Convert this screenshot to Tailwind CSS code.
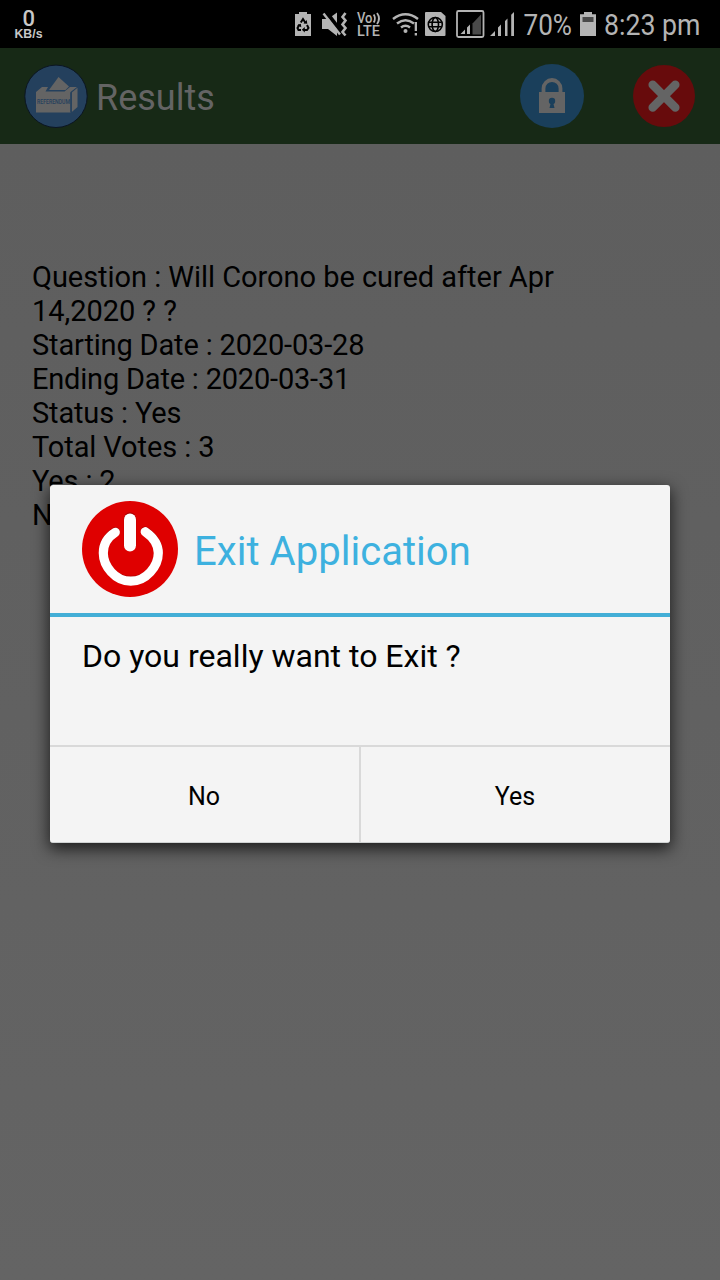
<!DOCTYPE html>
<html lang="en">
<head>
    <meta charset="UTF-8">
    <meta name="viewport" content="width=device-width, initial-scale=1.0">
    <title>Results</title>
    <script src="https://cdn.jsdelivr.net/npm/@tailwindcss/browser@4"></script>
    <style>
        body {
            font-family: Roboto, sans-serif;
        }
    </style>
</head>
<body class="w-[720px] h-[1280px] overflow-hidden relative flex flex-col bg-black text-black">
    <!-- Status bar -->
    <header class="h-12 shrink-0 flex items-center bg-black">
        <svg class="w-14 h-12" viewBox="0 0 56 48" fill="#c8c8c8" font-weight="700">
            <text x="22.500" y="26" font-size="22" font-weight="500" textLength="12.500" lengthAdjust="spacingAndGlyphs" font-family="Roboto">0</text>
            <text x="14.500" y="37.500" font-size="12" textLength="28" lengthAdjust="spacingAndGlyphs" font-family="Liberation Sans">KB/s</text>
        </svg>
        <div class="flex ml-auto">
            <!-- Battery saver -->
            <svg class="w-[26px] h-12" viewBox="290 0 26 48">
                <path d="M299 12h8v2h4v22h-16V14h4z" fill="#b4b4b4"/>
                <path d="M300.800 22.500L303 19l2.400 3.700M307 25l1.500 3-1.500 2h-3.500M301 30h-2.500l-1-2 2-3.500" fill="none" stroke="#000" stroke-width="2"/>
                <path d="M303.500 23.500l3.800.2-.6-3.800zM304.800 27v5.500l-3-2.700zM297 25.200l3.800-1.500.5 3.600z" fill="#000"/>
            </svg>
            <!-- Muted / vibrate -->
            <svg class="w-9 h-12" viewBox="316 0 36 48">
                <path d="M322 19h6l9-6.500v23.500l-9-7h-6z" fill="#b4b4b4"/>
                <path d="M325 10.500l16 21" stroke="#000" stroke-width="4"/>
                <path d="M323.500 13.500l16.500 21" stroke="#b4b4b4" stroke-width="2.400"/>
                <path d="M345.500 13l-3 4 3 3.500-3 4 3 3.500-3 4 3 3.500" fill="none" stroke="#b4b4b4" stroke-width="2.600"/>
            </svg>
            <!-- VoLTE -->
            <svg class="w-9 h-12" viewBox="352 0 36 48" fill="#b4b4b4" font-family="Roboto" font-weight="500">
                <text x="357" y="22.700" font-size="14" textLength="15.500" lengthAdjust="spacingAndGlyphs">Vo</text>
                <text x="357" y="36" font-size="14.500" textLength="23" lengthAdjust="spacingAndGlyphs">LTE</text>
                <path d="M373.700 14.500q2.500 4 0 8M377 13q4 5.500 0 11" fill="none" stroke="#b4b4b4" stroke-width="1.800"/>
            </svg>
            <!-- Wifi -->
            <svg class="w-9 h-12" viewBox="388 0 36 48">
                <g fill="none" stroke="#b4b4b4" stroke-width="2.500">
                    <path d="M393 19q12.500-9.500 25 0"/>
                    <path d="M397 23.500q8.500-6.500 17 0"/>
                    <path d="M401 27.500q4.500-3.500 9 0"/>
                </g>
                <circle cx="405.500" cy="31" r="2" fill="#b4b4b4"/>
                <path d="M414.700 22h2.300v9h-2.300zM414.700 33h2.300v2.500h-2.300z" fill="#b4b4b4"/>
            </svg>
            <!-- Sim with globe -->
            <svg class="w-7 h-12" viewBox="424 0 28 48">
                <path d="M426 12h15l4.500 4v19q0 1-1 1H426q-1 0-1-1V13q0-1 1-1z" fill="#b4b4b4"/>
                <g fill="none" stroke="#000" stroke-width="1.600">
                    <circle cx="435.300" cy="24.500" r="7"/>
                    <ellipse cx="435.300" cy="24.500" rx="3.200" ry="7"/>
                    <path d="M429 22.200h12.600M429 26.800h12.600"/>
                </g>
            </svg>
            <!-- Signals -->
            <svg class="w-[68px] h-12" viewBox="452 0 68 48">
                <rect x="457" y="11" width="26.500" height="26" rx="1.500" fill="none" stroke="#b4b4b4" stroke-width="1.800"/>
                <path d="M472.500 23.500l8.500-9v20h-8.500z" fill="#4a4a4a"/>
                <path d="M460.500 34l4.500-4.500V34zM467 27.500l3-3V34h-3z" fill="#b4b4b4"/>
                <path d="M490 36l5-5v5zM498 27.500l3-3V36h-3zM505 21l2.500-2.500V36H505zM511.200 14.700l2.800-2.700v24h-2.800z" fill="#b4b4b4"/>
            </svg>
            <svg class="w-[55px] h-12" viewBox="520 0 55 48" fill="#b4b4b4">
                <text x="523.500" y="35" font-size="30" textLength="48.500" lengthAdjust="spacingAndGlyphs" font-family="Roboto">70%</text>
            </svg>
            <!-- Battery -->
            <svg class="w-[25px] h-12" viewBox="575 0 25 48">
                <path d="M584 12h8v2.300h4V36h-16V14.300h4z" fill="#b4b4b4"/>
                <path d="M582.500 17h11v5h-11z" fill="#4a4a4a"/>
            </svg>
            <svg class="w-[120px] h-12" viewBox="600 0 120 48" fill="#b4b4b4">
                <text x="604" y="35" font-size="30" textLength="96.500" lengthAdjust="spacingAndGlyphs" font-family="Roboto">8:23 pm</text>
            </svg>
        </div>
    </header>

    <!-- App bar -->
    <nav class="h-24 shrink-0 flex items-center bg-[#172916] pl-6 pr-6">
        <svg class="w-16 h-16" viewBox="24 64 64 64">
            <circle cx="56" cy="96.300" r="31.200" fill="#24405d" stroke="#0b1522" stroke-width="1"/>
            <path d="M36 92l6-5h6l-2.500 4.500h19L70 87h7l-6.500 5v20.500H36z" fill="#646464"/>
            <path d="M49 90l9.500-13 10.500 9.500-3.500 3.500z" fill="#646464"/>
            <path d="M71.800 92.500l5.700-4.700v19.200l-5.700 5z" fill="#646464"/>
            <path d="M71 92.500V112" stroke="#24405d" stroke-width="1.200"/>
            <text x="37" y="104" font-size="7" font-weight="500" font-family="Roboto" textLength="33" lengthAdjust="spacingAndGlyphs" fill="#24405d">REFERENDUM</text>
        </svg>
        <h1 class="ml-2 text-[36px] leading-[42px] text-[#646464] pt-1">Results</h1>
        <div class="ml-auto flex items-center gap-12">
            <svg class="w-16 h-16" viewBox="520 64 64 64">
                <circle cx="552" cy="96" r="32" fill="#1a3f5b"/>
                <path d="M543.500 92v-3.500a8.500 8.500 0 0 1 17 0V92" fill="none" stroke="#646464" stroke-width="3.800"/>
                <path d="M539 92h26v21h-26z" fill="#646464"/>
                <circle cx="552" cy="101" r="3.200" fill="#1a3f5b"/>
                <path d="M551 102h2l1.500 6h-5z" fill="#1a3f5b"/>
            </svg>
            <svg class="w-16 h-16" viewBox="632 64 64 64">
                <circle cx="664" cy="96" r="31" fill="#670b0c"/>
                <path d="M652.700 84.800l22.600 22.600M675.300 84.800l-22.600 22.600" stroke="#646464" stroke-width="8.500" stroke-linecap="round"/>
            </svg>
        </div>
    </nav>

    <!-- Result details -->
    <main class="grow px-8 pt-[116px] bg-linear-to-b from-[#5e5e5e] to-[#646464] text-[29px] leading-[34px] tracking-[-0.16px]">
        <p class="w-[560px] tracking-[-0.04px]">Question : Will Corono be cured after Apr 14,2020 ? ?</p>
        <p>Starting Date : 2020-03-28</p>
        <p class="tracking-[-0.2px]">Ending Date : 2020-03-31</p>
        <p>Status : Yes</p>
        <p class="tracking-[-0.1px]">Total Votes : 3</p>
        <p>Yes : 2</p>
        <p>No : 1</p>
    </main>

    <!-- Exit dialog -->
    <div class="absolute left-[50px] top-[485px] w-[620px] h-[358px] flex flex-col rounded-[3px] bg-[#f4f4f4] border-b border-[#d0d3d3] shadow-[0_5px_16px_1px_rgba(0,0,0,0.7)]">
        <div class="h-32 shrink-0 flex items-center px-8">
            <svg class="w-24 h-24" viewBox="82 501 96 96">
                <circle cx="130" cy="549" r="48" fill="#df0000"/>
                <g fill="none" stroke-linecap="round">
                    <path d="M115.300 531.500C107 537 103.300 544.500 103.300 552.500C103.300 565 113 580.300 130.800 580.300C148.500 580.300 158.300 565 158.300 552.500C158.300 544.500 153.500 537 145.200 531" stroke="#b00000" stroke-width="9"/>
                    <path d="M115.300 532.300C107 537.500 103.300 545 103.300 553C103.300 566 115 581.200 130.800 581.200C146.500 581.200 158.300 566 158.300 553C158.300 545 153.500 537.500 145.200 531.700" stroke="#fff" stroke-width="9.200"/>
                    <path d="M130 518.500v26.500" stroke="#b00000" stroke-width="12.500"/>
                    <path d="M130 519.500v26" stroke="#fff" stroke-width="12"/>
                </g>
            </svg>
            <h2 class="ml-4 pt-1.5 text-[40px] leading-[48px] tracking-[0.04px] text-[#3db1df]">Exit Application</h2>
        </div>
        <div class="h-1 shrink-0 bg-[#43aed6]"></div>
        <p class="h-32 shrink-0 px-8 pt-5 text-[32px] leading-[38px]">Do you really want to Exit ?</p>
        <div class="grow flex border-t-2 border-[#d9d9d9] text-[25px]">
            <button class="w-[311px] pt-1 pr-px border-r-2 border-[#d9d9d9]">No</button>
            <button class="grow pt-1 pr-px">Yes</button>
        </div>
    </div>
</body>
</html>
